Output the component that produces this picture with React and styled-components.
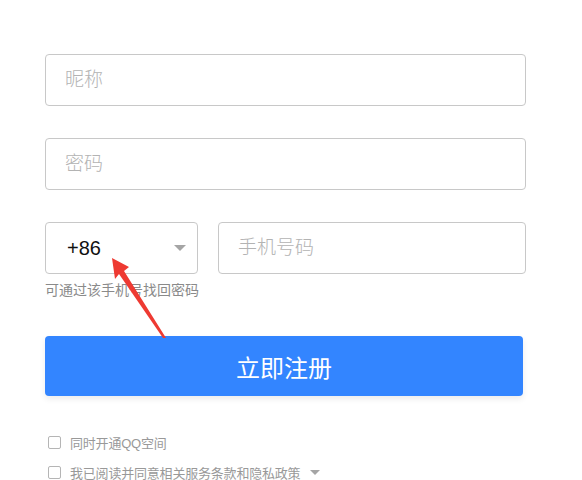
import React from "react";
import styled, { createGlobalStyle } from "styled-components";

const GlobalStyle = createGlobalStyle`
  body {
    margin: 0;
    background: #fff;
    font-family: "Liberation Sans", "Noto Sans CJK SC", sans-serif;
  }
`;

// whole form, the arrow sits over it
const Page = styled.div`
  position: relative;
  width: 481px;
  padding: 54px 0 0 45px;
`;

const Field = styled.input`
  display: block;
  box-sizing: border-box;
  width: ${({ $w }) => $w || "100%"};
  height: 52px;
  margin: 0 0 ${({ $mb }) => $mb || 0}px 0;
  padding: 0 19px;
  border: 1px solid #c8c8c8;
  border-radius: 4px;
  font-family: inherit;
  font-size: 19px;
  font-weight: 300;
  color: #333;
  outline: none;
  background: #fff;
  &::placeholder {
    color: #b3b3b3;
  }
`;

const PhoneRow = styled.div`
  display: flex;
  gap: 20px;
`;

const CodeSelect = styled.div`
  box-sizing: border-box;
  width: 153px;
  height: 52px;
  flex-shrink: 0;
  display: flex;
  align-items: center;
  justify-content: space-between;
  padding: 0 11px 0 21px;
  border: 1px solid #c8c8c8;
  border-radius: 4px;
  font-size: 20px;
  color: #111;
`;

const Caret = styled.span`
  width: 0;
  height: 0;
  margin-left: ${({ $ml }) => $ml || 0}px;
  border-left: ${({ $s }) => $s}px solid transparent;
  border-right: ${({ $s }) => $s}px solid transparent;
  border-top: ${({ $s }) => $s * 1.15}px solid #a5a5a5;
`;

const Hint = styled.div`
  margin-top: 6px;
  font-size: 14px;
  line-height: 20px;
  color: #8a8a8a;
`;

const Submit = styled.button`
  display: block;
  width: 478px;
  height: 60px;
  margin-top: 36px;
  border: none;
  border-radius: 4px;
  background: #3385ff;
  color: #fff;
  font-family: inherit;
  font-size: 24px;
  box-shadow: 0 3px 6px rgba(0, 0, 0, 0.08);
  cursor: pointer;
`;

const Options = styled.div`
  margin-top: 36px;
  display: flex;
  flex-direction: column;
  gap: 10px;
`;

const Option = styled.label`
  display: flex;
  align-items: center;
  gap: 9px;
  height: 20px;
  font-size: 13px;
  letter-spacing: -0.2px;
  color: #999;
  padding-left: 3px;
`;

const Box = styled.span`
  box-sizing: border-box;
  width: 13px;
  height: 13px;
  border: 1px solid #b5b5b5;
  border-radius: 2px;
`;

const Arrow = styled.svg`
  position: absolute;
  left: 0;
  top: 0;
  pointer-events: none;
`;

export default function App() {
  return (
    <>
      <GlobalStyle />
      <Page>
        <Field placeholder="昵称" $mb={32} />
        <Field placeholder="密码" type="password" $mb={32} />
        <PhoneRow>
          <CodeSelect>
            +86
            <Caret $s={6} />
          </CodeSelect>
          <Field placeholder="手机号码" />
        </PhoneRow>
        <Hint>可通过该手机号找回密码</Hint>
        <Submit>立即注册</Submit>
        <Options>
          <Option>
            <Box />
            同时开通QQ空间
          </Option>
          <Option>
            <Box />
            我已阅读并同意相关服务条款和隐私政策
            <Caret $s={5} $ml={1} />
          </Option>
        </Options>
        <Arrow width="582" height="480">
          <polygon
            points="112,258 129,267 124,271 166,338 163,338 119,274 115,279"
            fill="#ee3a32"
          />
        </Arrow>
      </Page>
    </>
  );
}
